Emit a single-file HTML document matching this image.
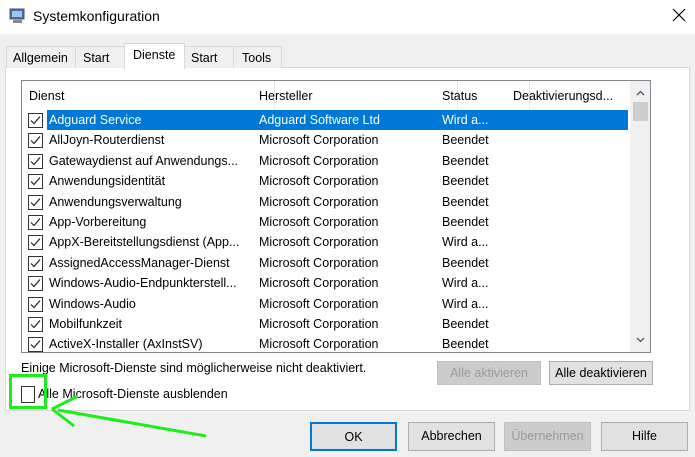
<!DOCTYPE html><html><head><meta charset="utf-8"><style>
*{margin:0;padding:0;box-sizing:border-box}
body{width:695px;height:457px;background:#f0f0f0;font-family:"Liberation Sans",sans-serif;font-size:12.5px;color:#000;position:relative;overflow:hidden}
.a{position:absolute;white-space:nowrap}
.btn{position:absolute;border:1px solid #adadad;background:#e1e1e1;text-align:center;font-size:12.5px}
</style></head><body>
<div class="a" style="left:0;top:0;width:695px;height:34px;background:#fff"></div>
<svg class="a" style="left:9px;top:8px" width="17" height="16"><rect x="1" y="1" width="14" height="10" fill="#3a6fc4" stroke="#555"/><rect x="3" y="3" width="10" height="6" fill="#9cc8f0"/><rect x="4" y="12" width="9" height="3" fill="#888"/></svg>
<div class="a" style="left:33px;top:8px;font-size:14px">Systemkonfiguration</div>
<svg class="a" style="left:672px;top:8px" width="14" height="14"><path d="M1 1L13 13M13 1L1 13" stroke="#000" stroke-width="1.2"/></svg>
<div class="a" style="left:5px;top:67px;width:685px;height:344px;background:#fff;border:1px solid #d9d9d9"></div>
<div class="a" style="left:6px;top:46px;width:70px;height:22px;border:1px solid #d9d9d9;border-bottom:none;background:#f0f0f0;padding:4px 0 0 6px">Allgemein</div>
<div class="a" style="left:75px;top:46px;width:50px;height:22px;border:1px solid #d9d9d9;border-bottom:none;background:#f0f0f0;padding:4px 0 0 7px">Start</div>
<div class="a" style="left:124px;top:43px;width:61px;height:26px;border:1px solid #d9d9d9;border-bottom:none;background:#fff;padding:4px 0 0 8px">Dienste</div>
<div class="a" style="left:184px;top:46px;width:50px;height:22px;border:1px solid #d9d9d9;border-bottom:none;background:#f0f0f0;padding:4px 0 0 6px">Start</div>
<div class="a" style="left:233px;top:46px;width:49px;height:22px;border:1px solid #d9d9d9;border-bottom:none;background:#f0f0f0;padding:4px 0 0 8px">Tools</div>
<div class="a" style="left:21px;top:80px;width:630px;height:273px;border:1px solid #828790;background:#fff;overflow:hidden">
<div class="a" style="left:252px;top:0;height:28px;border-left:1px solid #e5e5e5"></div>
<div class="a" style="left:435px;top:0;height:28px;border-left:1px solid #e5e5e5"></div>
<div class="a" style="left:507px;top:0;height:28px;border-left:1px solid #e5e5e5"></div>
<div class="a" style="left:7px;top:8px">Dienst</div>
<div class="a" style="left:237px;top:8px">Hersteller</div>
<div class="a" style="left:420px;top:8px">Status</div>
<div class="a" style="left:491px;top:8px">Deaktivierungsd...</div>
<div class="a" style="left:608px;top:0;width:21px;height:272px;background:#f0f0f0"></div>
<div class="a" style="left:611px;top:21px;width:15px;height:19px;background:#cdcdcd"></div>
<svg class="a" style="left:614px;top:9px" width="9" height="6"><path d="M1 5L4.5 1.5L8 5" fill="none" stroke="#555" stroke-width="1.3"/></svg>
<svg class="a" style="left:614px;top:256px" width="9" height="6"><path d="M1 1L4.5 4.5L8 1" fill="none" stroke="#555" stroke-width="1.3"/></svg>
</div>
<div class="a" style="left:47px;top:110px;width:581px;height:20px;background:#0078d7"></div>
<div id="rows"></div>
<script>
var d=[["Adguard Service","Adguard Software Ltd","Wird a..."],["AllJoyn-Routerdienst","Microsoft Corporation","Beendet"],["Gatewaydienst auf Anwendungs...","Microsoft Corporation","Beendet"],["Anwendungsidentität","Microsoft Corporation","Beendet"],["Anwendungsverwaltung","Microsoft Corporation","Beendet"],["App-Vorbereitung","Microsoft Corporation","Beendet"],["AppX-Bereitstellungsdienst (App...","Microsoft Corporation","Wird a..."],["AssignedAccessManager-Dienst","Microsoft Corporation","Beendet"],["Windows-Audio-Endpunkterstell...","Microsoft Corporation","Wird a..."],["Windows-Audio","Microsoft Corporation","Wird a..."],["Mobilfunkzeit","Microsoft Corporation","Beendet"],["ActiveX-Installer (AxInstSV)","Microsoft Corporation","Beendet"]];
var h="";d.forEach(function(r,i){var y=110+i*20.4;var c=i==0?"#fff":"#000";var ch=y+18>352?"height:"+(352-y)+"px;overflow:hidden;":"";
h+='<div class="a" style="left:22px;top:'+y+'px;width:606px;height:20px;'+ch+'color:'+c+'">'+
'<svg class="a" style="left:6px;top:3px" width="15" height="15"><rect x="0.5" y="0.5" width="14" height="14" fill="#fff" stroke="#333"/><path d="M3 7.5L6 10.5L12 3.5" fill="none" stroke="#222" stroke-width="1.2"/></svg>'+
'<span class="a" style="left:27px;top:3px">'+r[0]+'</span><span class="a" style="left:237px;top:3px">'+r[1]+'</span><span class="a" style="left:420px;top:3px">'+r[2]+'</span></div>';});
document.getElementById("rows").innerHTML=h;
</script>
<div class="a" style="left:21px;top:361px">Einige Microsoft-Dienste sind möglicherweise nicht deaktiviert.</div>
<div class="btn" style="left:437px;top:361px;width:104px;height:24px;line-height:22px;color:#9a9a9a;background:#ccc;border-color:#bfbfbf">Alle aktivieren</div>
<div class="btn" style="left:549px;top:361px;width:104px;height:24px;line-height:22px">Alle deaktivieren</div>
<div class="a" style="left:21px;top:386px;width:14px;height:17px;border:1px solid #333;background:#fff"></div>
<div class="a" style="left:38px;top:387px">Alle Microsoft-Dienste ausblenden</div>
<div class="a" style="left:9px;top:374px;width:38px;height:35px;border:3px solid #1bef1b"></div>
<svg class="a" style="left:0;top:0" width="695" height="457"><path d="M206 436L58 410" stroke="#1bef1b" stroke-width="3"/><path d="M52 409L78 396M52 409L74 426" stroke="#1bef1b" stroke-width="3" fill="none"/></svg>
<div class="btn" style="left:310px;top:422px;width:87px;height:29px;line-height:27px;border:2px solid #0078d7">OK</div>
<div class="btn" style="left:408px;top:422px;width:87px;height:29px;line-height:27px">Abbrechen</div>
<div class="btn" style="left:504px;top:422px;width:87px;height:29px;line-height:27px;color:#9a9a9a;background:#ccc;border-color:#bfbfbf">Übernehmen</div>
<div class="btn" style="left:601px;top:422px;width:87px;height:29px;line-height:27px">Hilfe</div>
</body></html>
